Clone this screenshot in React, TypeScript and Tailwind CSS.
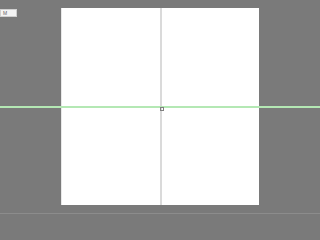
export default function App() {
  return (
    <div className="relative h-screen min-h-[214px] w-full overflow-hidden bg-[#7a7a7a] font-['Liberation_Sans',sans-serif]">
      {/* canvas */}
      <div className="pt-[8px]">
        <div className="relative mx-auto flex h-[197px] w-[198px] justify-center border-l border-[#e8e8e8] bg-white">
          <div className="h-full w-[2px] bg-[#dadada]" />
        </div>
      </div>

      {/* horizontal guide */}
      <div className="absolute left-0 top-[106px] h-[2px] w-full bg-[#b4e8b4]" />

      {/* cursor marker */}
      <div className="absolute left-[160px] top-[107px] h-[4px] w-[4px] border border-[#808080]" />

      {/* zoom label */}
      <div className="absolute left-0 top-[9px] flex h-[8px] w-[17px] items-center border border-[#d0d0d0] bg-[#f4f4f4] pl-[2px] text-[5px] leading-none text-[#666]">
        M
      </div>

      <div className="absolute left-0 top-[213px] h-px w-full bg-[#8c8c8c]" />
    </div>
  );
}
